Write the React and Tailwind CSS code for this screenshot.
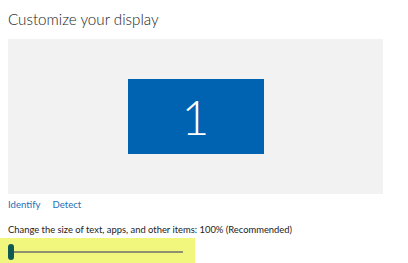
export default function App() {
  return (
    <div className="w-[408px] h-[263px] bg-white overflow-hidden" style={{ fontFamily: 'Lato, "Open Sans", sans-serif' }}>
      <div className="pl-[8px] pt-[8px] text-[15.2px] leading-[23px] font-light text-[#1a1a1a]">Customize your display</div>
      <div className="ml-[8px] mt-[8px] w-[375px] h-[155px] bg-[#f2f2f2] flex items-center justify-center">
        <div className="w-[136px] h-[75px] bg-[#0063b1] flex items-center justify-center">
          <span className="text-white text-[48px] leading-none font-light">1</span>
        </div>
      </div>
      <div className="pl-[8px] mt-[4px] flex gap-[12px] text-[9.6px] leading-[14px] text-[#1f6fb4]">
        <span>Identify</span>
        <span>Detect</span>
      </div>
      <div className="pl-[8px] mt-[11px] text-[9.4px] leading-[14px] text-[#222]">Change the size of text, apps, and other items: 100% (Recommended)</div>
      <div className="mt-[1px] w-[195px] h-[28px] bg-[#f1f77c] flex items-center pl-[8px]">
        <div className="relative w-[175px] h-[16px] flex items-center">
          <div className="w-full h-[2px] bg-[#8f9070]" />
          <div className="absolute left-0 top-0 w-[6px] h-[16px] rounded-full bg-[#0f5a52]" />
        </div>
      </div>
    </div>
  );
}
